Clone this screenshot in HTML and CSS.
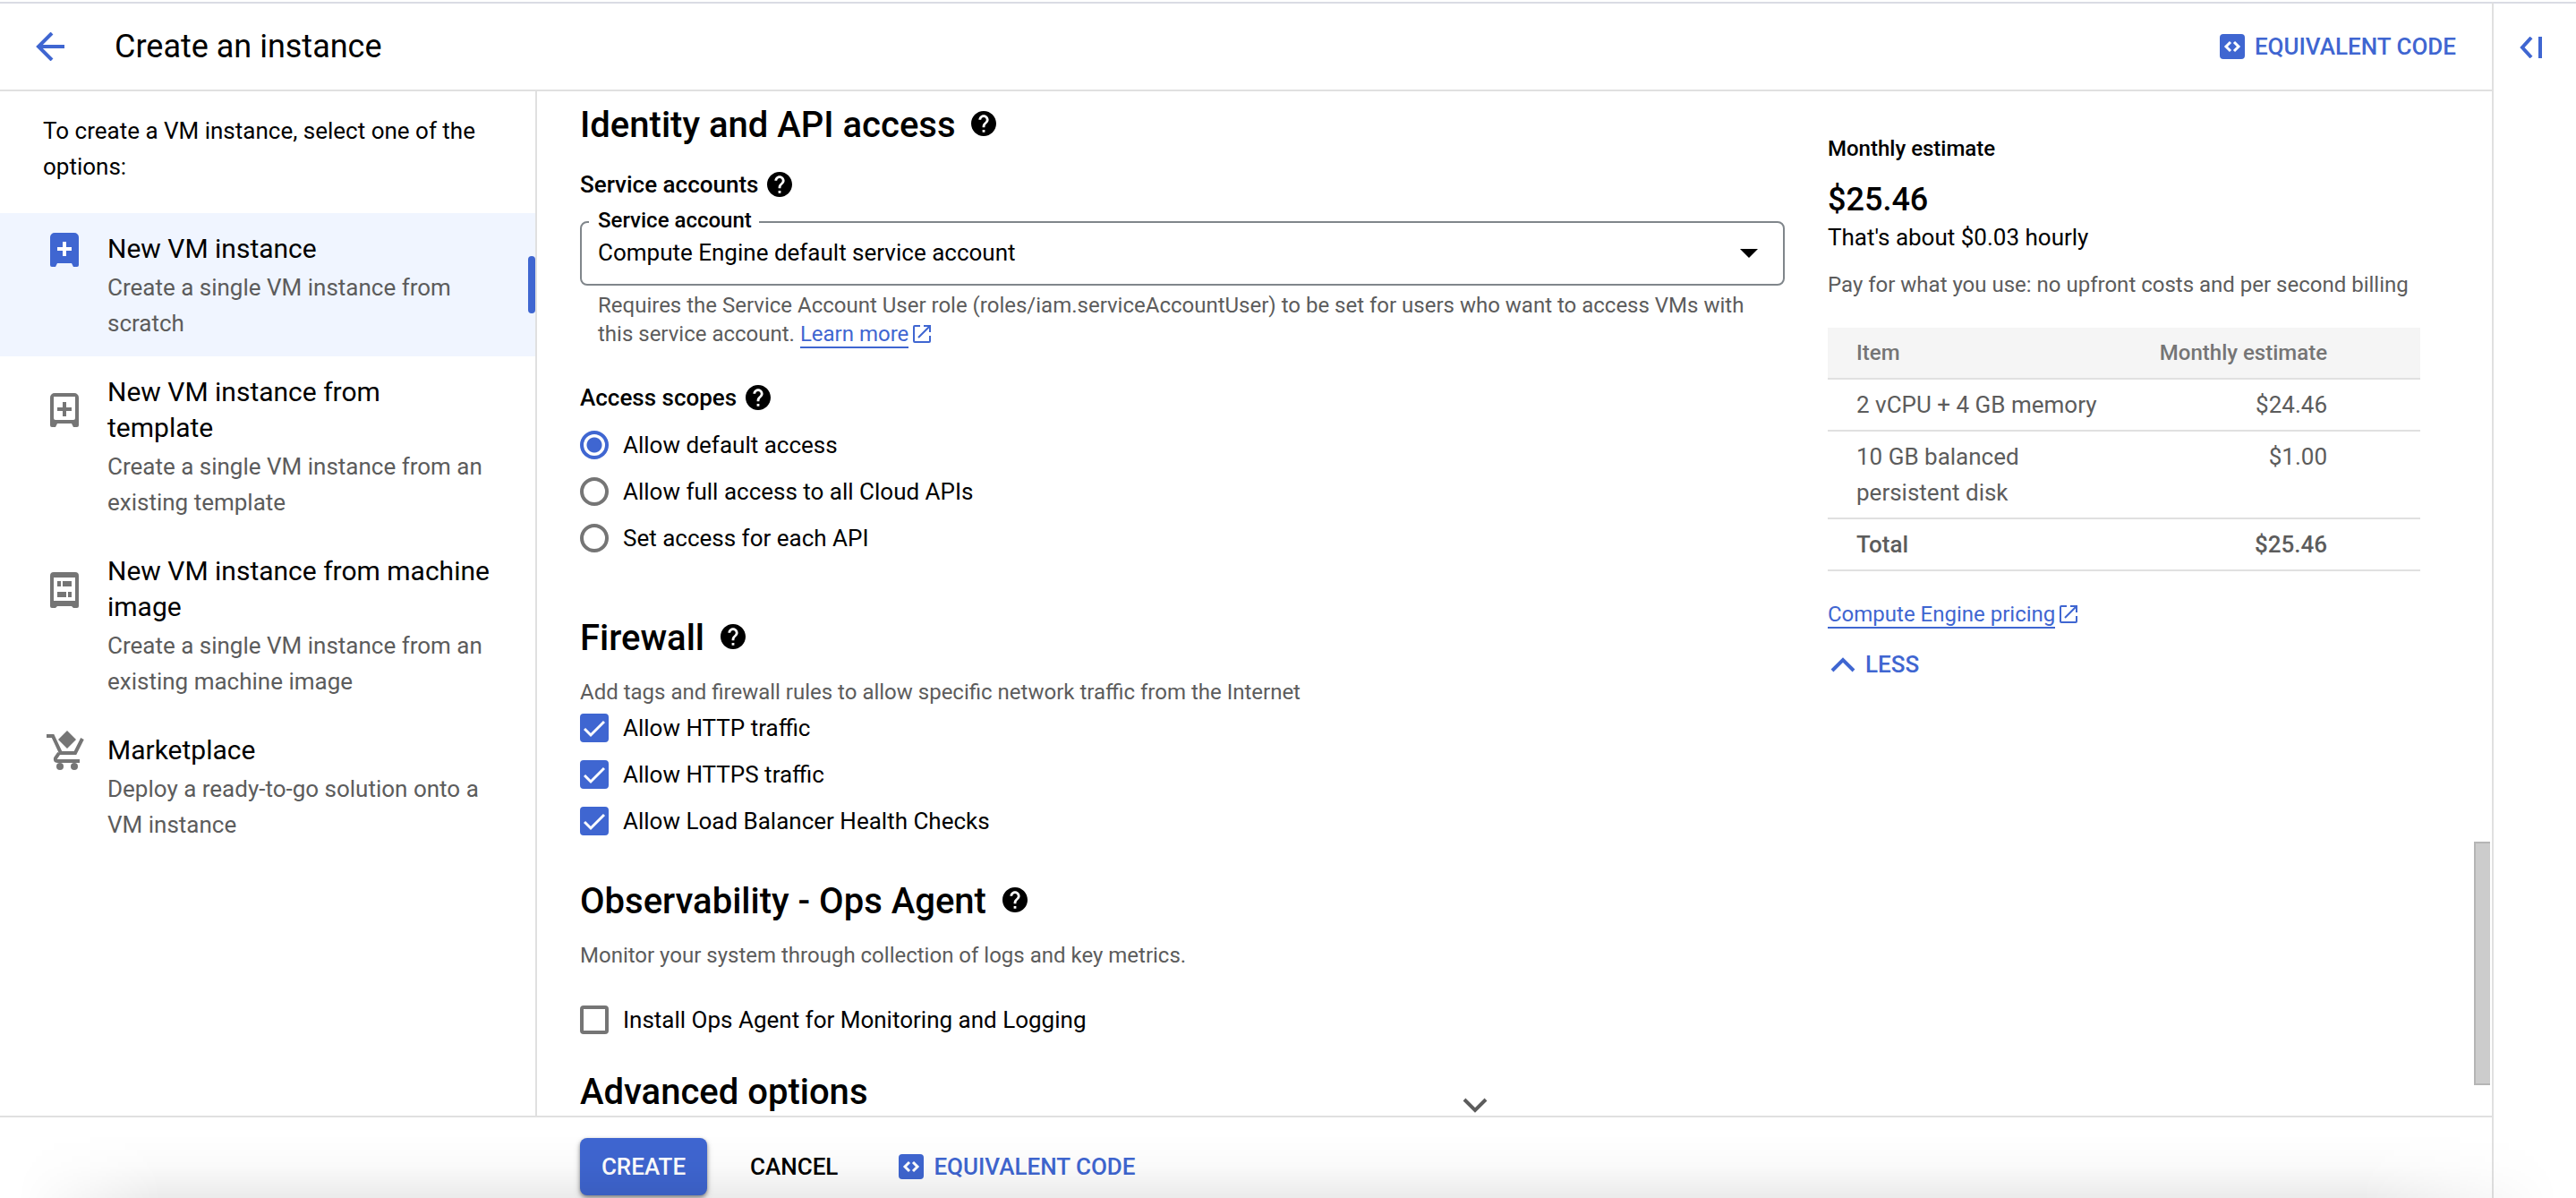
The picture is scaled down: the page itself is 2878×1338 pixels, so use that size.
FILE: index.html
```html
<!DOCTYPE html>
<html lang="en">
<head>
<meta charset="utf-8">
<title>Create an instance</title>
<link rel="stylesheet" href="styles.css">
</head>
<body>
<svg class="sprite" aria-hidden="true">
  <symbol id="help" viewBox="2 2 20 20"><path fill="currentColor" d="M12 2C6.48 2 2 6.48 2 12s4.480 10 10 10 10-4.480 10-10S17.520 2 12 2zm1 17h-2v-2h2v2zm2.070-7.750l-.9.920C13.450 12.900 13 13.500 13 15h-2v-.5c0-1.100.450-2.100 1.170-2.830l1.240-1.260c.370-.360.590-.860.590-1.410 0-1.100-.9-2-2-2s-2 .9-2 2H8c0-2.210 1.790-4 4-4s4 1.790 4 4c0 .880-.360 1.680-.930 2.250z"/></symbol>
  <symbol id="external" viewBox="0 0 20 20"><path fill="none" stroke="currentColor" stroke-width="2" d="M8 1H2a1 1 0 0 0-1 1v16a1 1 0 0 0 1 1h16a1 1 0 0 0 1-1v-6M12 1h7v7M19 1L6 14"/></symbol>
  <symbol id="code" viewBox="0 0 28 28"><rect width="28" height="28" rx="4" fill="currentColor"/><path fill="none" stroke="#fff" stroke-width="3" d="M12 9l-5 5 5 5M16 9l5 5-5 5"/></symbol>
</svg>
<div class="app">
  <div class="page">
    <header class="topbar">
      <button class="icon-button" type="button" aria-label="Back">
        <svg width="32" height="32" viewBox="0 0 32 32"><path fill="none" stroke="currentColor" stroke-width="4" d="M32 16H3M18 1L3 16l15 15"/></svg>
      </button>
      <h1 class="title">Create an instance</h1>
      <button class="code-button" type="button"><svg width="28" height="28"><use href="#code"/></svg>EQUIVALENT CODE</button>
    </header>
    <div class="body">
      <nav class="sidebar">
        <p class="intro">To create a VM instance, select one of the options:</p>
        <a class="option selected" href="#new">
          <svg class="option-icon" width="32" height="38" viewBox="0 0 32 38"><path fill="currentColor" d="M5 0h22a5 5 0 0 1 5 5v31a2 2 0 0 1-2 2h-4l-2-4H8l-2 4H2a2 2 0 0 1-2-2V5a5 5 0 0 1 5-5z"/><path stroke="#fff" stroke-width="4" d="M8 18h16M16 10v16"/></svg>
          <span class="option-text"><span class="option-title">New VM instance</span><span class="option-desc">Create a single VM instance from scratch</span></span>
        </a>
        <a class="option" href="#template">
          <svg class="option-icon lower" width="32" height="38" viewBox="0 0 32 38"><path fill="currentColor" fill-rule="evenodd" d="M5 0h22a5 5 0 0 1 5 5v31a2 2 0 0 1-2 2h-4l-2-4H8l-2 4H2a2 2 0 0 1-2-2V5a5 5 0 0 1 5-5zM4 4v24a2 2 0 0 0 2 2h20a2 2 0 0 0 2-2V4z"/><path stroke="currentColor" stroke-width="4" d="M8 18h16M16 10v16"/></svg>
          <span class="option-text"><span class="option-title">New VM instance from template</span><span class="option-desc">Create a single VM instance from an existing template</span></span>
        </a>
        <a class="option" href="#image">
          <svg class="option-icon lower" width="32" height="40" viewBox="0 0 32 40"><path fill="currentColor" fill-rule="evenodd" d="M4 0h24a4 4 0 0 1 4 4v34a2 2 0 0 1-2 2h-4l-2-2H8l-2 2H2a2 2 0 0 1-2-2V4a4 4 0 0 1 4-4zM4 6v26h24V6zM8 10h4v6H8zM14 10h10v6H14zM8 22h10v6H8zM20 22h4v6h-4z"/></svg>
          <span class="option-text"><span class="option-title">New VM instance from machine image</span><span class="option-desc">Create a single VM instance from an existing machine image</span></span>
        </a>
        <a class="option" href="#marketplace">
          <svg class="option-icon cart" width="42" height="44" viewBox="0 0 42 44"><path fill="none" stroke="currentColor" stroke-width="4" d="M0 6h7l9 19h16l8-16M14 25l-4 6q-1 3 2 3h25"/><path fill="currentColor" d="M23 0l10 10-10 10L13 10z"/><circle cx="15" cy="40" r="4" fill="currentColor"/><circle cx="31" cy="40" r="4" fill="currentColor"/></svg>
          <span class="option-text"><span class="option-title">Marketplace</span><span class="option-desc">Deploy a ready-to-go solution onto a VM instance</span></span>
        </a>
      </nav>
      <main class="main">
        <form class="form">
          <h2>Identity and API access <svg class="help"><use href="#help"/></svg></h2>
          <h3 class="accounts">Service accounts <svg class="help"><use href="#help"/></svg></h3>
          <div class="field">
            <label class="field-label" for="account">Service account</label>
            <select id="account" class="select"><option>Compute Engine default service account</option></select>
            <svg class="caret" width="20" height="10" viewBox="0 0 20 10"><path d="M0 0h20L10 10z"/></svg>
          </div>
          <p class="hint">Requires the Service Account User role (roles/iam.serviceAccountUser) to be set for users who want to access VMs with this service account. <a class="link" href="#learn"><span>Learn more</span><svg width="20" height="20"><use href="#external"/></svg></a></p>
          <h3 class="scopes">Access scopes <svg class="help"><use href="#help"/></svg></h3>
          <div class="choices">
            <label class="choice"><input type="radio" name="scope" checked>Allow default access</label>
            <label class="choice"><input type="radio" name="scope">Allow full access to all Cloud APIs</label>
            <label class="choice"><input type="radio" name="scope">Set access for each API</label>
          </div>
          <h2 class="firewall">Firewall <svg class="help"><use href="#help"/></svg></h2>
          <p class="note">Add tags and firewall rules to allow specific network traffic from the Internet</p>
          <div class="choices rules">
            <label class="choice"><input type="checkbox" checked>Allow HTTP traffic</label>
            <label class="choice"><input type="checkbox" checked>Allow HTTPS traffic</label>
            <label class="choice"><input type="checkbox" checked>Allow Load Balancer Health Checks</label>
          </div>
          <h2 class="agent">Observability - Ops Agent <svg class="help"><use href="#help"/></svg></h2>
          <p class="note">Monitor your system through collection of logs and key metrics.</p>
          <div class="choices install">
            <label class="choice"><input type="checkbox">Install Ops Agent for Monitoring and Logging</label>
          </div>
          <h2 class="advanced">Advanced options</h2>
        </form>
        <aside class="estimate">
          <h4>Monthly estimate</h4>
          <p class="price">$25.46</p>
          <p class="hourly">That's about $0.03 hourly</p>
          <p class="billing">Pay for what you use: no upfront costs and per second billing</p>
          <table class="costs">
            <thead><tr><th scope="col">Item</th><th scope="col" class="amount">Monthly estimate</th></tr></thead>
            <tbody>
              <tr><td>2 vCPU + 4 GB memory</td><td class="amount">$24.46</td></tr>
              <tr><td>10 GB balanced persistent disk</td><td class="amount">$1.00</td></tr>
              <tr class="total"><td>Total</td><td class="amount">$25.46</td></tr>
            </tbody>
          </table>
          <p class="pricing"><a class="link" href="#pricing"><span>Compute Engine pricing</span><svg width="20" height="20"><use href="#external"/></svg></a></p>
          <button class="less" type="button"><svg width="28" height="18" viewBox="0 0 28 18"><path fill="none" stroke="currentColor" stroke-width="4" d="M2 16L14 4l12 12"/></svg>LESS</button>
        </aside>
        <svg class="more-below" width="28" height="18" viewBox="0 0 28 18"><path fill="none" stroke="currentColor" stroke-width="4" d="M2 2l12 12L26 2"/></svg>
        <div class="scroll-thumb"></div>
      </main>
    </div>
    <footer class="actions">
      <button class="create" type="button">CREATE</button>
      <button class="cancel" type="button">CANCEL</button>
      <button class="code-button" type="button"><svg width="28" height="28"><use href="#code"/></svg>EQUIVALENT CODE</button>
    </footer>
  </div>
  <div class="rail">
    <button class="icon-button" type="button" aria-label="Open panel">
      <svg width="26" height="24" viewBox="0 0 26 24"><path fill="none" stroke="currentColor" stroke-width="4" d="M13 1L3 12l10 11M23 0v24"/></svg>
    </button>
  </div>
</div>
<div class="window-shade"></div>
</body>
</html>
```

FILE: styles.css
```css
* { box-sizing: border-box; }
body {
  margin: 0;
  background: #fff;
  color: #000;
  font: 26px/40px Roboto, "Liberation Sans", sans-serif;
}
h1, h2, h3, h4, p { margin: 0; }
svg { display: block; flex: none; }
a { color: inherit; text-decoration: none; }
button {
  border: 0;
  padding: 0;
  background: none;
  color: inherit;
  font: 500 26px/40px Roboto, "Liberation Sans", sans-serif;
}
.sprite { position: absolute; width: 0; height: 0; }

.app { display: flex; height: 100vh; padding-top: 2px; overflow: hidden; }
.page {
  flex: 1;
  min-width: 0;
  display: flex;
  flex-direction: column;
  border-top: 2px solid #dadce4;
}
.rail {
  width: 94px;
  padding: 37px 0 0 29px;
  border-top: 2px solid #dadce4;
  border-left: 2px solid #e0e0e0;
}
.rail .icon-button { display: block; }

.topbar {
  display: flex;
  align-items: center;
  height: 98px;
  padding: 0 40px;
  border-bottom: 2px solid #e0e0e0;
}
.icon-button, .code-button { color: #3f66d1; }
.title { margin-left: 56px; font-size: 36px; font-weight: 400; }
.code-button { display: flex; align-items: center; gap: 11px; }
.topbar .code-button { margin-left: auto; }

.body { flex: 1; min-height: 0; display: flex; }
.sidebar { width: 600px; flex: none; border-right: 2px solid #e0e0e0; }
.intro { padding: 24px 48px 32px; }
.option { position: relative; display: flex; gap: 32px; padding: 20px 48px 17px 56px; }
.option-icon { margin-top: 2px; color: #757575; }
.option-icon.lower { margin-top: 21px; }
.option-icon.cart { margin: -2px -6px 0 -4px; }
.option-title, .option-desc { display: block; }
.option-title { font-size: 30px; }
.option-desc { margin-top: 3px; color: #5c5c5c; }
.selected { background: #f0f5ff; }
.selected .option-icon { color: #3f66d1; }
.selected::after {
  content: "";
  position: absolute;
  right: 0;
  top: 48px;
  width: 8px;
  height: 64px;
  border-radius: 4px;
  background: #3f66d1;
}

.main {
  position: relative;
  flex: 1;
  min-width: 0;
  display: grid;
  grid-template-columns: minmax(0, 1fr) 662px;
  gap: 48px;
  padding: 14px 80px 0 48px;
  overflow: hidden;
}
h2, h3 { display: flex; align-items: center; font-weight: 500; }
h2 { gap: 18px; font-size: 40px; line-height: 48px; }
h3 { gap: 10px; font-size: 26px; }
.help { width: 28px; height: 28px; }
h2 .help { margin-bottom: 4px; }
.accounts { margin-top: 22px; }
.field { position: relative; margin-top: 21px; }
.field-label {
  position: absolute;
  left: 10px;
  top: -17px;
  padding: 0 8px 0 10px;
  background: #fff;
  font-size: 24px;
  font-weight: 500;
  line-height: 32px;
}
.select {
  appearance: none;
  display: block;
  width: 100%;
  height: 72px;
  padding: 0 64px 2px 18px;
  border: 2px solid #80868b;
  border-radius: 8px;
  background: #fff;
  color: #000;
  font: inherit;
}
.caret { position: absolute; right: 30px; top: 31px; pointer-events: none; }
.hint { margin: 6px 20px 0; color: #5c5c5c; font-size: 24px; line-height: 32px; }
.link { color: #3f66d1; }
.link span { border-bottom: 2px solid; }
.link svg { display: inline-block; margin-left: 5px; vertical-align: -2px; }
.scopes { margin-top: 35px; }
.choices { display: grid; gap: 20px; margin-top: 17px; }
.choice { display: flex; align-items: center; gap: 16px; line-height: 32px; }
.choice input {
  appearance: none;
  width: 32px;
  height: 32px;
  margin: 0;
  border: 4px solid #757575;
  border-radius: 4px;
  background: #fff;
}
.choice input[type="radio"] { border-radius: 50%; }
.choice input:checked { border-color: #3f66d1; }
.choice input[type="radio"]:checked { background: radial-gradient(circle, #3f66d1 8px, #fff 9px); }
.choice input[type="checkbox"]:checked {
  background: #3f66d1 url("data:image/svg+xml,%3Csvg xmlns='http://www.w3.org/2000/svg' viewBox='0 0 24 24'%3E%3Cpath d='M1 13l7 7L23 5' fill='none' stroke='%23fff' stroke-width='3'/%3E%3C/svg%3E") center / 24px no-repeat;
}
.firewall { margin-top: 72px; }
.note { margin-top: 20px; color: #5c5c5c; font-size: 24px; line-height: 32px; }
.rules { margin-top: 8px; }
.agent { margin-top: 50px; }
.install { margin-top: 40px; }
.advanced { margin-top: 41px; }

.estimate { padding-top: 30px; }
h4 { font-size: 24px; font-weight: 500; }
.price { margin-top: 17px; font-size: 36px; font-weight: 500; }
.hourly { margin-top: 2px; }
.billing { margin-top: 13px; color: #5c5c5c; font-size: 24px; }
.costs { width: 100%; margin-top: 28px; border-collapse: collapse; color: #5c5c5c; }
.costs tr { border-bottom: 2px solid #e0e0e0; }
.costs th, .costs td { padding: 8px 0 8px 32px; vertical-align: top; text-align: left; }
.costs th { background: #f5f5f5; color: #757575; font-size: 24px; font-weight: 500; }
.costs .amount { width: 348px; padding: 8px 104px 8px 0; text-align: right; }
.total { font-weight: 500; }
.pricing { margin-top: 32px; font-size: 24px; line-height: 32px; }
.less { display: flex; align-items: center; gap: 11px; margin: 20px 0 0 3px; color: #3f66d1; }

.more-below { position: absolute; left: 48%; bottom: 2px; margin-left: -14px; color: #5c5c5c; }
.scroll-thumb {
  position: absolute;
  right: 2px;
  bottom: 34px;
  width: 18px;
  height: 272px;
  border: 2px solid #b5b5b5;
  border-right: 0;
  background: #ccc;
}

.actions {
  display: flex;
  align-items: center;
  height: 92px;
  padding: 20px 48px 0 648px;
  border-top: 2px solid #e0e0e0;
}
.create {
  width: 142px;
  height: 64px;
  border-radius: 8px;
  background: #3f66d1;
  box-shadow: 0 2px 4px rgba(0, 0, 0, .4), 0 4px 8px rgba(0, 0, 0, .15);
  color: #fff;
}
.cancel { margin: 0 68px 0 48px; }

.window-shade {
  position: fixed;
  inset: auto 0 0;
  height: 72px;
  pointer-events: none;
  background: linear-gradient(transparent, rgba(0, 0, 0, .02) 50%, rgba(0, 0, 0, .08));
  mask-image: linear-gradient(90deg, transparent 20px, #000 180px calc(100% - 240px), transparent calc(100% - 20px));
}
```
